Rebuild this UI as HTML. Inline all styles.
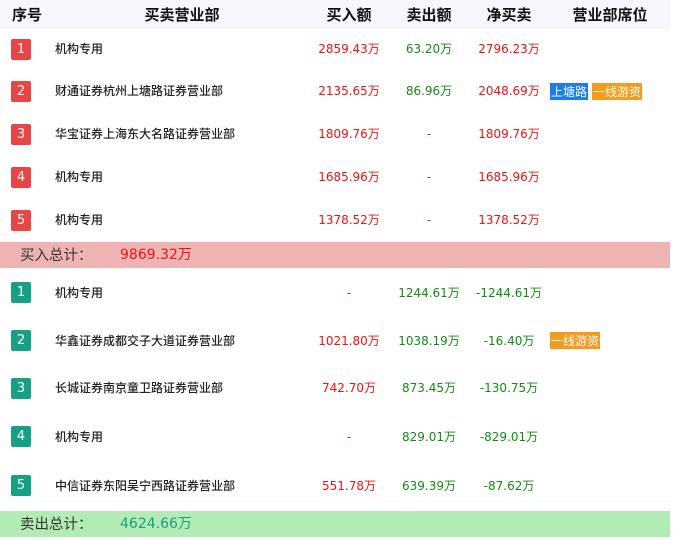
<!DOCTYPE html>
<html><head><meta charset="utf-8"><style>
*{margin:0;padding:0;box-sizing:border-box}
body{width:676px;height:540px;background:#fff;position:relative;overflow:hidden;font-family:"DejaVu Sans","Noto Sans CJK SC",sans-serif;}
.hd{position:absolute;left:0;top:0;width:670px;height:29px;background:#f5f7fd}
.h{position:absolute;top:0;height:29px;line-height:29px;font-size:15px;font-weight:bold;color:#111;font-family:"Noto Sans CJK SC",sans-serif;transform:translateX(-50%);white-space:nowrap}
.b{position:absolute;left:11px;width:20px;height:21px;border-radius:2px;color:#fff;font-size:13px;line-height:21px;text-align:center}
.r{background:#e84545}.g{background:#16a085}
.n{position:absolute;left:55px;font-size:12px;color:#222;font-family:"Noto Sans CJK SC",sans-serif;font-weight:500;line-height:16px;white-space:nowrap}
.v{position:absolute;font-size:12px;line-height:16px;transform:translateX(-50%);white-space:nowrap}
.red{color:#f51010}.grn{color:#138a13}
.t{position:absolute;height:17px;line-height:17px;font-size:12px;color:#fff;padding:0 1px;font-family:"Noto Sans CJK SC",sans-serif}
.bl{background:#1a7cf0}.or{background:#f59a1b}
.sum{position:absolute;left:0;width:670px;height:26px}
.sl{position:absolute;left:20px;top:0;line-height:26px;font-size:14.5px;color:#333;font-family:"Noto Sans CJK SC",sans-serif}
.sv{position:absolute;left:120px;top:0;line-height:26px;font-size:14px}
</style></head><body>
<div class="hd"></div>
<div class="h" style="left:27px">序号</div>
<div class="h" style="left:182px">买卖营业部</div>
<div class="h" style="left:349px">买入额</div>
<div class="h" style="left:429px">卖出额</div>
<div class="h" style="left:509px">净买卖</div>
<div class="h" style="left:610px">营业部席位</div>

<div class="b r" style="top:39px">1</div><div class="n" style="top:41px">机构专用</div>
<div class="v red" style="left:349px;top:41px">2859.43万</div><div class="v grn" style="left:429px;top:41px">63.20万</div><div class="v red" style="left:509px;top:41px">2796.23万</div>

<div class="b r" style="top:81px">2</div><div class="n" style="top:83px">财通证券杭州上塘路证券营业部</div>
<div class="v red" style="left:349px;top:83px">2135.65万</div><div class="v grn" style="left:429px;top:83px">86.96万</div><div class="v red" style="left:509px;top:83px">2048.69万</div>
<div class="t bl" style="left:550px;top:83px">上塘路</div><div class="t or" style="left:592px;top:83px">一线游资</div>

<div class="b r" style="top:124px">3</div><div class="n" style="top:126px">华宝证券上海东大名路证券营业部</div>
<div class="v red" style="left:349px;top:126px">1809.76万</div><div class="v grn" style="left:429px;top:126px">-</div><div class="v red" style="left:509px;top:126px">1809.76万</div>

<div class="b r" style="top:167px">4</div><div class="n" style="top:169px">机构专用</div>
<div class="v red" style="left:349px;top:169px">1685.96万</div><div class="v grn" style="left:429px;top:169px">-</div><div class="v red" style="left:509px;top:169px">1685.96万</div>

<div class="b r" style="top:210px">5</div><div class="n" style="top:212px">机构专用</div>
<div class="v red" style="left:349px;top:212px">1378.52万</div><div class="v grn" style="left:429px;top:212px">-</div><div class="v red" style="left:509px;top:212px">1378.52万</div>

<div class="sum" style="top:242px;background:#eeb4b4"><div class="sl">买入总计：</div><div class="sv red">9869.32万</div></div>

<div class="b g" style="top:282px">1</div><div class="n" style="top:285px">机构专用</div>
<div class="v red" style="left:349px;top:285px">-</div><div class="v grn" style="left:429px;top:285px">1244.61万</div><div class="v grn" style="left:509px;top:285px">-1244.61万</div>

<div class="b g" style="top:330px">2</div><div class="n" style="top:333px">华鑫证券成都交子大道证券营业部</div>
<div class="v red" style="left:349px;top:333px">1021.80万</div><div class="v grn" style="left:429px;top:333px">1038.19万</div><div class="v grn" style="left:509px;top:333px">-16.40万</div>
<div class="t or" style="left:550px;top:332px">一线游资</div>

<div class="b g" style="top:378px">3</div><div class="n" style="top:380px">长城证券南京童卫路证券营业部</div>
<div class="v red" style="left:349px;top:380px">742.70万</div><div class="v grn" style="left:429px;top:380px">873.45万</div><div class="v grn" style="left:509px;top:380px">-130.75万</div>

<div class="b g" style="top:426px">4</div><div class="n" style="top:429px">机构专用</div>
<div class="v red" style="left:349px;top:429px">-</div><div class="v grn" style="left:429px;top:429px">829.01万</div><div class="v grn" style="left:509px;top:429px">-829.01万</div>

<div class="b g" style="top:475px">5</div><div class="n" style="top:478px">中信证券东阳吴宁西路证券营业部</div>
<div class="v red" style="left:349px;top:478px">551.78万</div><div class="v grn" style="left:429px;top:478px">639.39万</div><div class="v grn" style="left:509px;top:478px">-87.62万</div>

<div class="sum" style="top:511px;background:#b3ebb5"><div class="sl">卖出总计：</div><div class="sv" style="color:#16a085">4624.66万</div></div>
</body></html>
